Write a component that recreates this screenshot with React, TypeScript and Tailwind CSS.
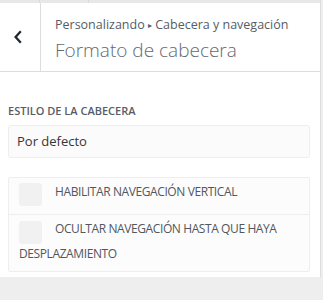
import React from "react";

export default function App() {
  return (
    <div
      className="w-[323px] h-[300px] bg-[#eeeeee] overflow-hidden"
      style={{ fontFamily: '"Open Sans", "Liberation Sans", sans-serif' }}
    >
      <div className="w-[321px] h-[277px] bg-white border-r border-[#dddddd] flex flex-col">
        <div className="h-[3px] bg-[#e8e8e8] flex shrink-0">
          <div className="w-[40px] border-r border-[#dcdcdc]" />
          <div className="w-[49px] border-r border-[#dcdcdc]" />
        </div>
        <div className="h-[69px] flex border-b border-[#dddddd] shrink-0">
          <div className="w-[41px] border-r border-[#dddddd] flex items-center justify-center">
            <svg width="10" height="14" viewBox="0 0 10 14" className="mr-[4px]">
              <path d="M7.8 1.3 L2.6 7 L7.8 12.7" fill="none" stroke="#23282d" strokeWidth="2.3" />
            </svg>
          </div>
          <div className="flex flex-col pl-[14px] pt-[13px]">
            <div className="text-[12.5px] leading-[18px] text-[#555d66] whitespace-nowrap">
              Personalizando <span className="text-[8px] relative -top-[1px]">▸</span> Cabecera y navegación
            </div>
            <div className="text-[19px] leading-[26px] text-[#646970] mt-[2px] font-light">
              Formato de cabecera
            </div>
          </div>
        </div>
        <div className="px-[8px] pt-[31px]">
          <div className="text-[11px] leading-[16px] font-semibold text-[#555d66]">
            ESTILO DE LA CABECERA
          </div>
          <div className="mt-[6px] h-[33px] w-[302px] bg-[#fbfbfb] border border-[#eeeeee] rounded-[3px] flex items-center pl-[8px] text-[13px] text-[#32373c]">
            Por defecto
          </div>
          <div className="mt-[19px] w-[302px] border border-[#eeeeee] rounded-[2px] bg-[#fcfcfc]">
            <div className="px-[10px] pt-[5px] pb-[8px] text-[12px] leading-[16px] text-[#50575e] tracking-[-0.4px]">
              <span className="inline-block w-[23px] h-[23px] bg-[#f1f1f1] rounded-[3px] align-[-10px] mr-[13px]" />
              HABILITAR NAVEGACIÓN VERTICAL
            </div>
            <div className="border-t border-[#eeeeee] px-[10px] pt-[4px] pb-[8px] text-[12px] leading-[19px] text-[#50575e] tracking-[-0.4px]">
              <span className="inline-block w-[23px] h-[23px] bg-[#f1f1f1] rounded-[3px] align-[-11px] mr-[13px]" />
              OCULTAR NAVEGACIÓN HASTA QUE HAYA DESPLAZAMIENTO
            </div>
          </div>
        </div>
      </div>
    </div>
  );
}
